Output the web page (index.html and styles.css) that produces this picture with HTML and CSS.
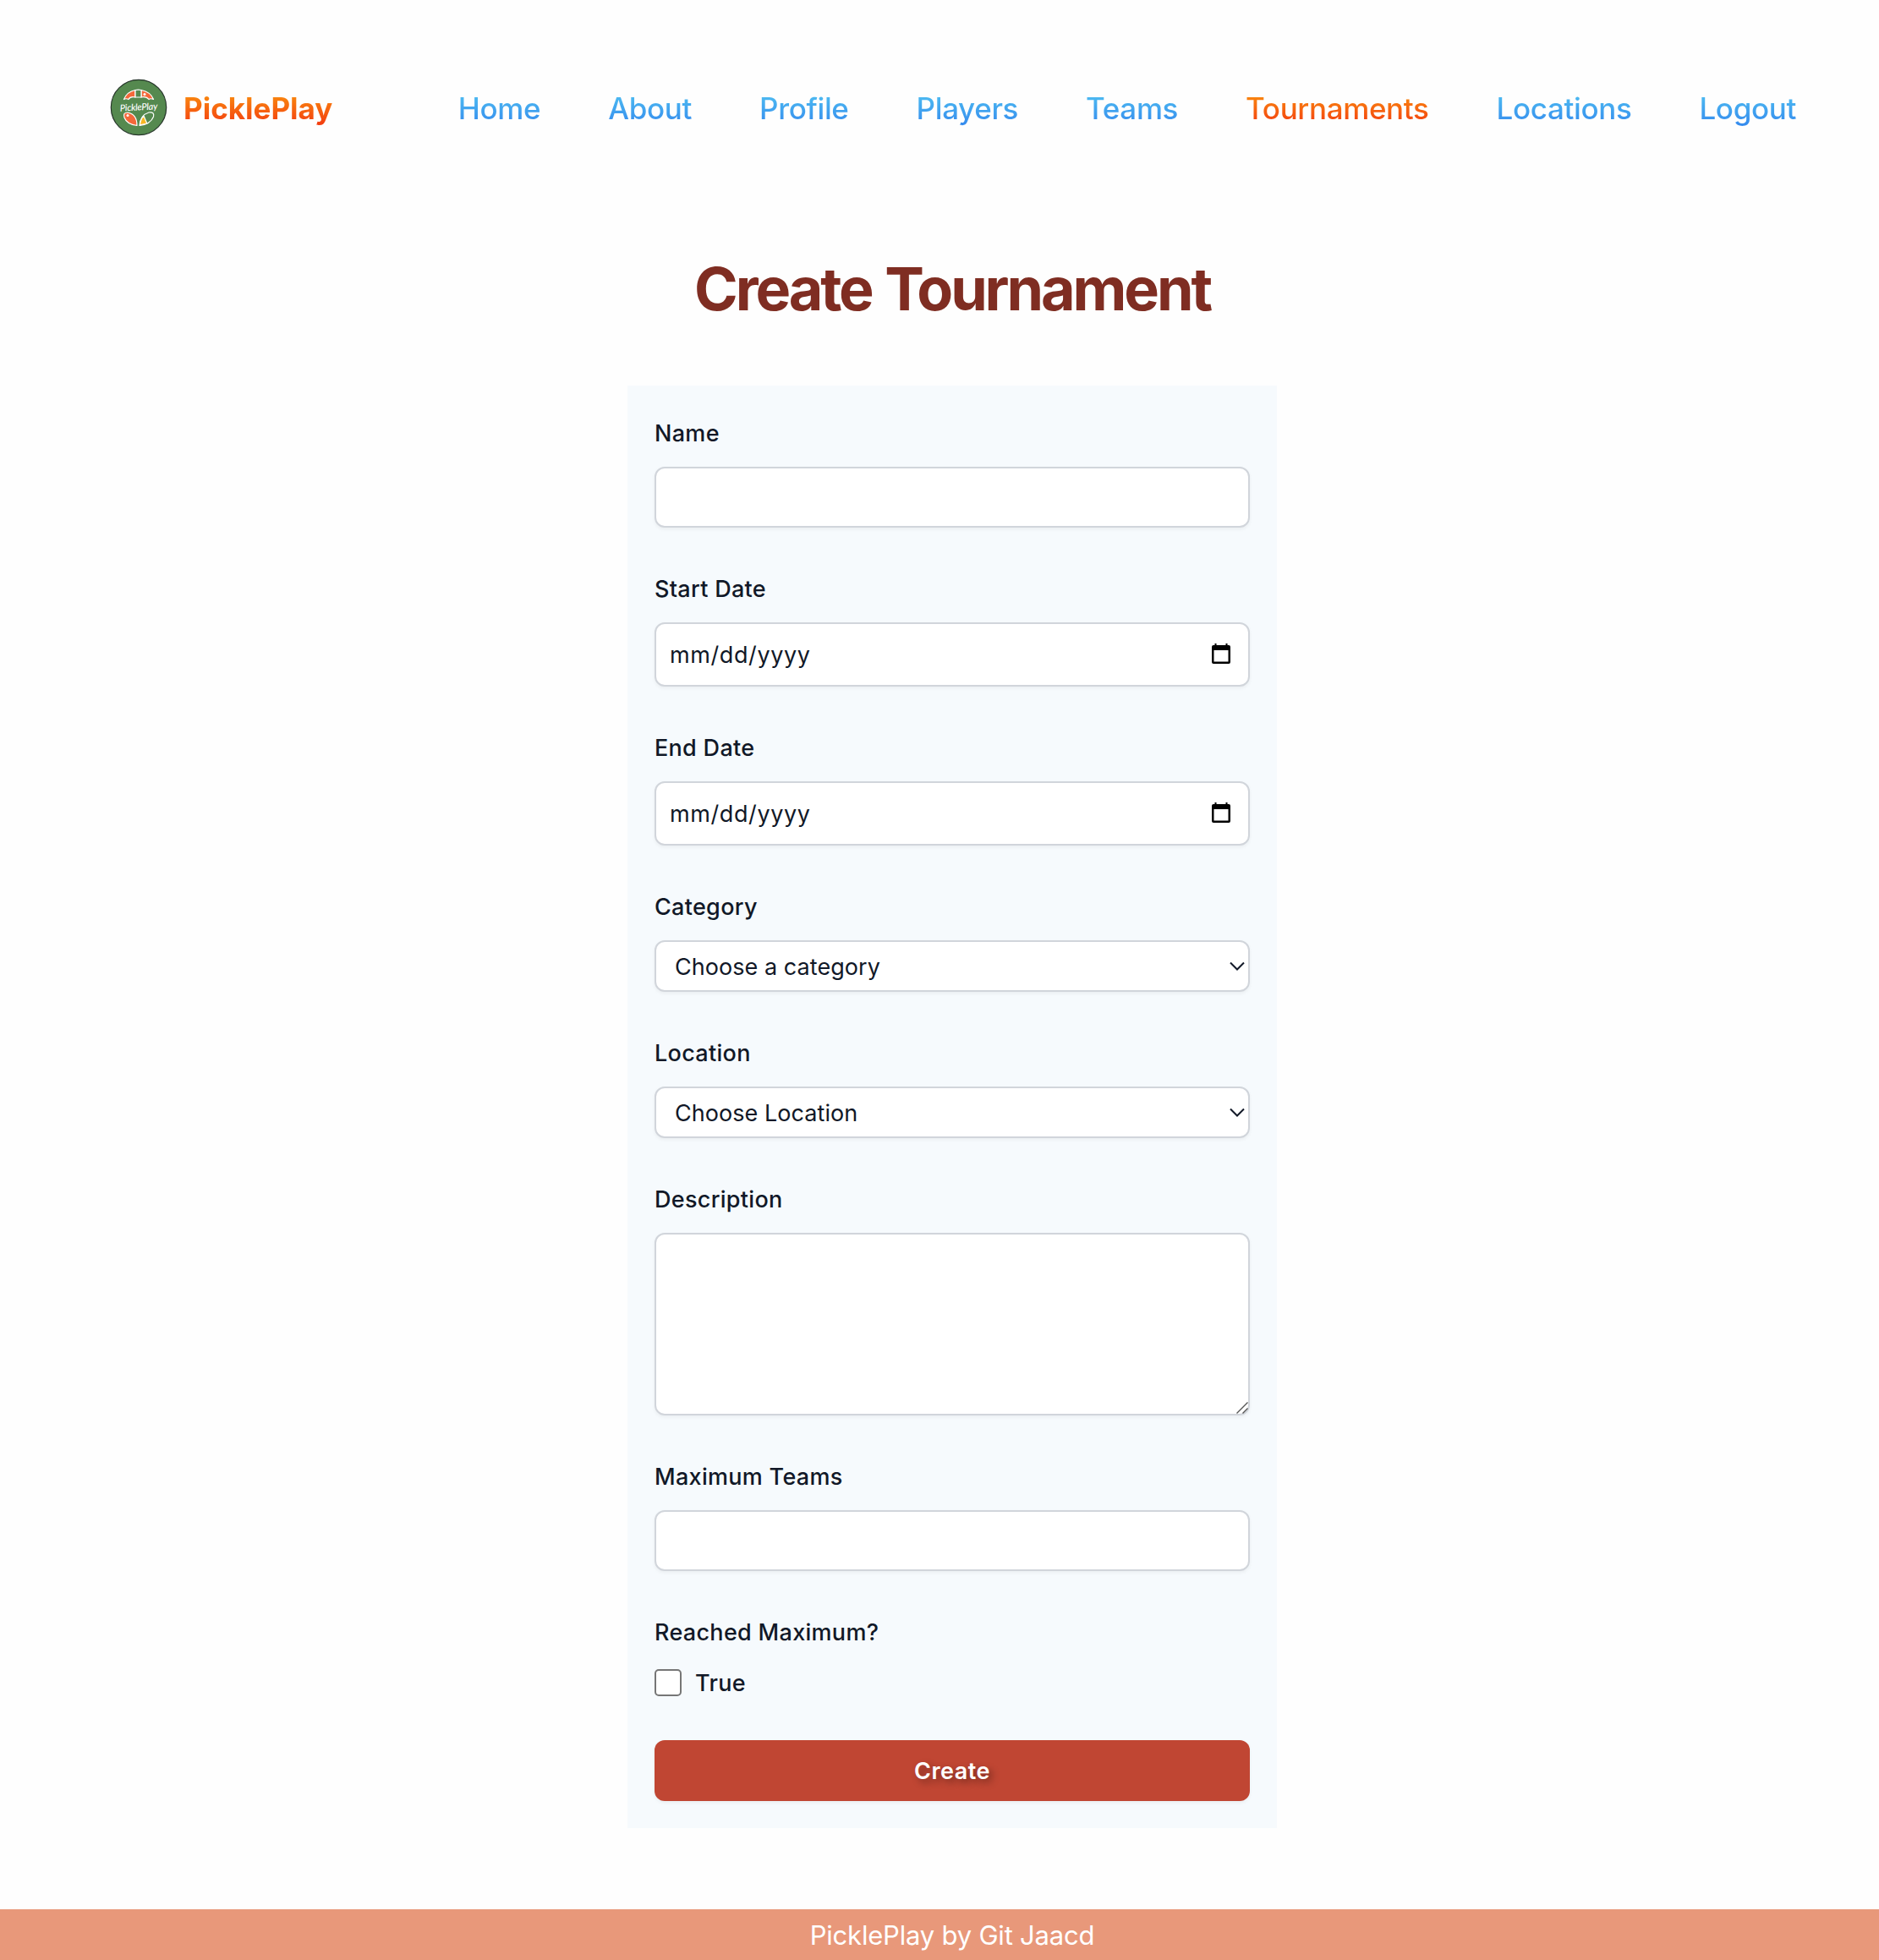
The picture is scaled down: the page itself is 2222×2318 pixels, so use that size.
FILE: index.html
```
<!DOCTYPE html>
<html lang="en">
<head>
<meta charset="utf-8">
<title>PicklePlay</title>
<link rel="stylesheet" href="styles.css">
</head>
<body>
<header class="header">
  <a class="brand">
    <svg class="logo" viewBox="0 0 68 68">
      <circle cx="34" cy="34" r="32.7" fill="#55894f" stroke="#26352a" stroke-width="1.2"/>
      <g stroke="#fff" stroke-width="1.2" stroke-linejoin="round">
        <path d="M16.500 24.500Q20 15.500 30 13.500V22Q24 20.500 22 24.500Q19 23 16.500 24.500Z" fill="#f4683a"/>
        <path d="M37 13.500Q48 15.500 51.500 24.500Q48 23 46 24.500Q43 20.500 37 22Z" fill="#f4683a"/>
        <path d="M30 13.500Q33.500 12.800 37 13.500V22H30Z" fill="#55894f"/>
        <path d="M32 55.500Q20 54 17 46Q15 40 21 40Q32 42 32 55.500Z" fill="#f4683a"/>
        <path d="M35 55.500Q36 43 46 40Q53 39 51.500 45Q48 54 35 55.500Z" fill="#55894f"/>
        <path d="M35.500 54.800Q36 48 40 44L43.800 53Z" fill="#f8b823"/>
      </g>
      <circle cx="21" cy="43.500" r="1.500" fill="#fff"/>
      <circle cx="41" cy="18.500" r="1.500" fill="#fff"/>
      <text class="logo-text" x="34" y="37.500" text-anchor="middle" transform="rotate(-3 34 34)">PicklePlay</text>
    </svg>
    <span class="brand-name warm">PicklePlay</span>
  </a>
  <nav class="nav">
    <a class="cool">Home</a>
    <a class="cool">About</a>
    <a class="cool">Profile</a>
    <a class="cool">Players</a>
    <a class="cool">Teams</a>
    <a class="warm">Tournaments</a>
    <a class="cool">Locations</a>
    <a class="cool">Logout</a>
  </nav>
</header>
<main class="main">
  <h1 class="title">Create Tournament</h1>
  <form class="form">
    <div class="field"><label>Name</label><input class="control" type="text"></div>
    <div class="field"><label>Start Date</label>
      <div class="control date"><span>mm/dd/yyyy</span>
        <svg class="calendar" viewBox="0 0 22 24"><path fill-rule="evenodd" d="M3.500 0H5.500V2H16.500V0H18.500V2H20Q22 2 22 4V22Q22 24 20 24H2Q0 24 0 22V4Q0 2 2 2H3.500ZM2.500 8V21.500H19.500V8Z"/></svg>
      </div></div>
    <div class="field"><label>End Date</label>
      <div class="control date"><span>mm/dd/yyyy</span>
        <svg class="calendar" viewBox="0 0 22 24"><path fill-rule="evenodd" d="M3.500 0H5.500V2H16.500V0H18.500V2H20Q22 2 22 4V22Q22 24 20 24H2Q0 24 0 22V4Q0 2 2 2H3.500ZM2.500 8V21.500H19.500V8Z"/></svg>
      </div></div>
    <div class="field"><label>Category</label>
      <div class="control select"><span>Choose a category</span>
        <svg class="chevron" viewBox="0 0 18 11"><path d="M1 1.500L9 9.500L17 1.500"/></svg>
      </div></div>
    <div class="field"><label>Location</label>
      <div class="control select"><span>Choose Location</span>
        <svg class="chevron" viewBox="0 0 18 11"><path d="M1 1.500L9 9.500L17 1.500"/></svg>
      </div></div>
    <div class="field"><label>Description</label>
      <div class="area"><textarea class="control"></textarea>
        <svg class="grip" viewBox="0 0 14 14"><path d="M0.500 13.500L13.500 0.500M7.500 13.500L13.500 7.500"/></svg>
      </div></div>
    <div class="field"><label>Maximum Teams</label><input class="control" type="text"></div>
    <div class="field"><label>Reached Maximum?</label>
      <div class="check"><input class="box" type="checkbox"><label>True</label></div></div>
    <button class="submit" type="button">Create</button>
  </form>
</main>
<footer class="footer">PicklePlay by Git Jaacd</footer>
</body>
</html>
```
FILE: styles.css
```
* { box-sizing: border-box; }
body {
  margin: 0;
  min-height: 2318px;
  display: flex;
  flex-direction: column;
  background: #fefefe;
  color: #111827;
  font-family: Inter, "Liberation Sans", sans-serif;
  font-size: 27px;
}
.header {
  display: flex;
  align-items: center;
  height: 256px;
  padding: 0 98px 2px 130px;
}
.brand { display: flex; align-items: center; gap: 19px; }
.logo { display: block; width: 68px; height: 68px; overflow: visible; }
.logo-text { font: italic 500 11px Lato, sans-serif; letter-spacing: -0.2px; fill: #fff; }
.nav { display: flex; gap: 80px; margin-left: auto; }
.nav a, .brand-name { font-size: 35px; line-height: 56px; position: relative; top: 1px; }
.nav a { font-weight: 500; letter-spacing: -0.36px; }
.brand-name { font-weight: 700; }
.warm, .cool { background-clip: text; -webkit-background-clip: text; color: transparent; }
.warm { background-image: linear-gradient(#fba30f, #f22b10); }
.cool { background-image: linear-gradient(#56ccf2, #2f80ed); }
.main { display: flex; flex-direction: column; align-items: center; padding: 0 16px; margin-left: 30px; }
.title {
  margin: 46px 0 74px;
  font-size: 70px;
  line-height: 80px;
  font-weight: 700;
  letter-spacing: -3.1px;
  word-spacing: 2px;
  color: #7f2d22;
}
.form {
  width: 768px;
  padding: 32px;
  display: flex;
  flex-direction: column;
  gap: 48px;
  background: #f6fafd;
}
.field { display: flex; flex-direction: column; gap: 16px; }
label { height: 48px; line-height: 50px; font-weight: 500; letter-spacing: 0.3px; }
.control {
  display: flex;
  width: 704px;
  height: 72px;
  margin: 0;
  border: 2px solid #d1d5db;
  border-radius: 12px;
  background: #fff;
  box-shadow: 0 2px 4px rgba(0, 0, 0, .05);
  align-items: center;
  justify-content: space-between;
}
.date { height: 76px; padding: 0 21px 0 16px; letter-spacing: 0.6px; }
.calendar { width: 22px; height: 24px; margin-bottom: 2px; }
.select { height: 61px; padding: 0 4px 0 22px; letter-spacing: 0.05px; }
.select span { padding-top: 1px; }
.chevron, .grip { fill: none; stroke: #111827; stroke-width: 2; }
.chevron { width: 18px; height: 11px; }
.area { position: relative; height: 216px; }
.area .control { height: 216px; resize: none; }
.grip { position: absolute; right: 2px; bottom: 2px; width: 14px; height: 14px; stroke: #555; stroke-width: 1.400; }
.check { display: flex; align-items: center; gap: 16px; height: 48px; margin: -4px 0; }
.box { appearance: none; width: 32px; height: 32px; margin: 0; border: 2px solid #767676; border-radius: 5px; background: #fff; }
.submit {
  height: 72px;
  padding: 2px 0 0;
  border: 0;
  border-radius: 12px;
  background: #c04633;
  box-shadow: 0 2px 4px rgba(0, 0, 0, .05);
  color: #fff;
  font: 600 27px/48px Inter, sans-serif;
  letter-spacing: 0.5px;
  text-shadow: 4px 4px 8px rgba(0, 0, 0, .4);
}
.footer {
  height: 60px;
  margin-top: auto;
  background: #e8987a;
  color: #fff;
  font-size: 31px;
  line-height: 62px;
  letter-spacing: -0.2px;
  text-align: center;
  padding-left: 30px;
}
```
